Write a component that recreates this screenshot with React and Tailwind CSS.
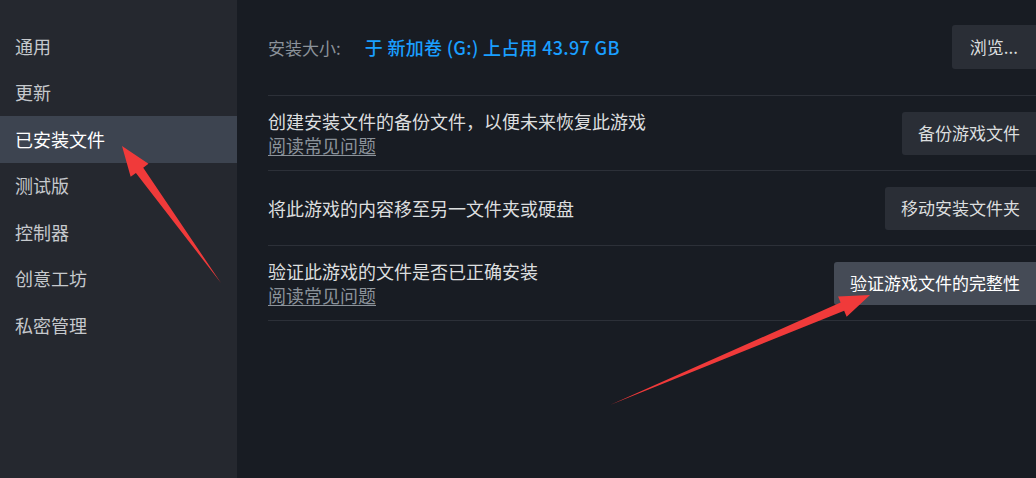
import React from "react";

const font = { fontFamily: '"Noto Sans CJK SC", "Noto Sans", sans-serif' };

const navItems = ["通用", "更新", "已安装文件", "测试版", "控制器", "创意工坊", "私密管理"];

const Arrow = ({ x1, y1, x2, y2 }) => {
  // tapered arrow from (x1,y1) tail to (x2,y2) tip
  const dx = x2 - x1;
  const dy = y2 - y1;
  const len = Math.hypot(dx, dy);
  const ux = dx / len;
  const uy = dy / len;
  const px = -uy;
  const py = ux;
  const headLen = 30;
  const headW = 11;
  const neckW = 4.5;
  const bx = x2 - ux * headLen;
  const by = y2 - uy * headLen;
  const pts = [
    [x1, y1],
    [bx + px * neckW, by + py * neckW],
    [bx + px * headW, by + py * headW],
    [x2, y2],
    [bx - px * headW, by - py * headW],
    [bx - px * neckW, by - py * neckW],
  ];
  return <polygon points={pts.map((p) => p.join(",")).join(" ")} fill="#f03a3a" />;
};

const Row = ({ text, link, button, hover }) => (
  <div className="flex items-center justify-between border-b border-[#2c3038] h-[75px]">
    <div className="flex flex-col">
      <span className="text-[18px] leading-[24px] text-[#dcdedf]">{text}</span>
      {link && (
        <span className="text-[18px] leading-[24px] text-[#8b929a] underline underline-offset-2 w-fit">
          阅读常见问题
        </span>
      )}
    </div>
    <div
      className={`h-[43px] flex items-center px-[16px] rounded-l-[3px] text-[17px] ${
        hover ? "bg-[#454b56] text-white" : "bg-[#2a2e36] text-[#dcdedf]"
      }`}
    >
      {button}
    </div>
  </div>
);

export default function App() {
  return (
    <div className="relative w-[1036px] h-[478px] flex bg-[#181c23] overflow-hidden" style={font}>
      <aside className="w-[237px] bg-[#25282f] pt-[23px] flex flex-col">
        {navItems.map((item) => (
          <div
            key={item}
            className={`h-[46.5px] flex items-center pl-[15px] text-[18px] ${
              item === "已安装文件" ? "bg-[#3d4450] text-white" : "text-[#c6c9cd]"
            }`}
          >
            {item}
          </div>
        ))}
      </aside>

      <main className="flex-1 pl-[31px] flex flex-col">
        <div className="flex items-center justify-between h-[96px] border-b border-[#2c3038]">
          <div className="flex items-center">
            <span className="text-[17px] text-[#8b929a]">安装大小:</span>
            <span className="ml-[24px] text-[18px] font-medium tracking-[0.3px] text-[#1a9fff]">
              于 新加卷 (G:) 上占用 43.97 GB
            </span>
          </div>
          <div className="h-[44px] flex items-center px-[18px] bg-[#2a2e36] text-[17px] text-[#dcdedf] rounded-l-[3px] mb-[2px]">
            浏览...
          </div>
        </div>
        <Row text="创建安装文件的备份文件，以便未来恢复此游戏" link button="备份游戏文件" />
        <Row text="将此游戏的内容移至另一文件夹或硬盘" button="移动安装文件夹" />
        <Row text="验证此游戏的文件是否已正确安装" link button="验证游戏文件的完整性" hover />
      </main>

      <svg className="absolute inset-0 pointer-events-none" width="1036" height="478">
        <Arrow x1={221} y1={283} x2={122} y2={146} />
        <Arrow x1={610} y1={405} x2={870} y2={295} />
      </svg>
    </div>
  );
}
